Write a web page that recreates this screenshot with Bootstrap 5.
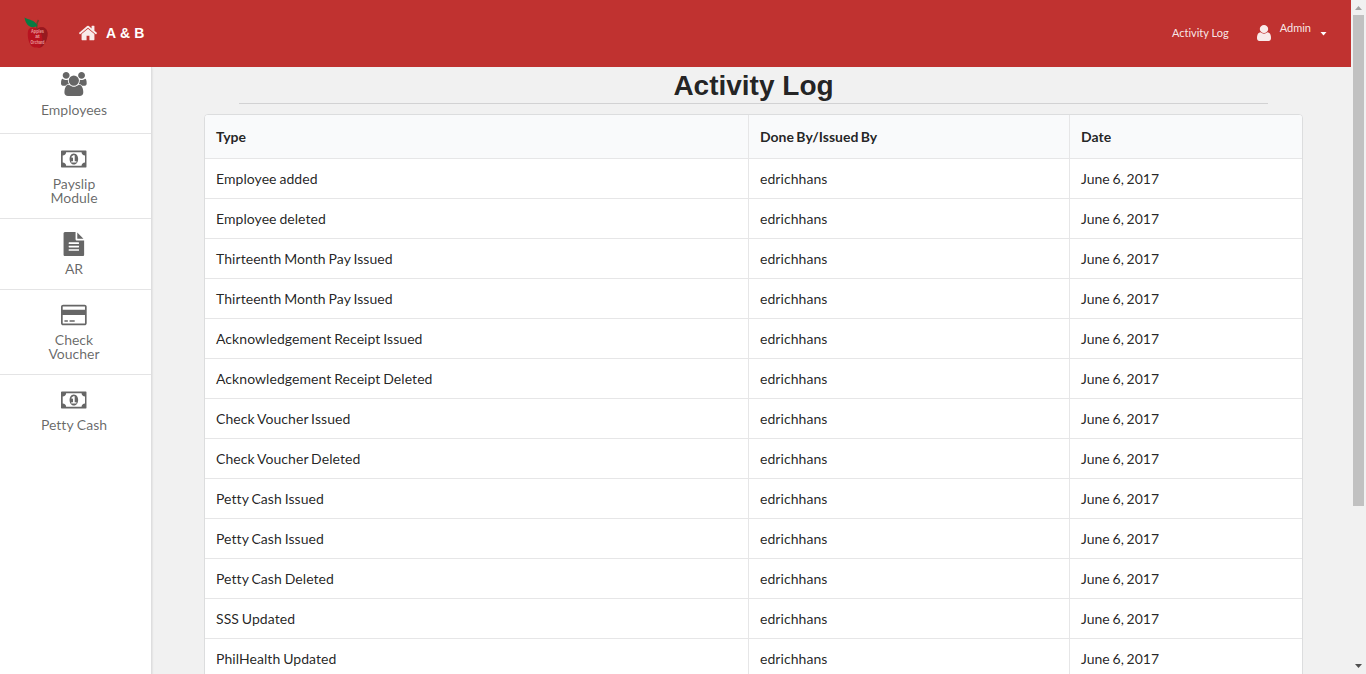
<!DOCTYPE html>
<html lang="en">
<head>
<meta charset="utf-8">
<meta name="viewport" content="width=device-width, initial-scale=1">
<title>Activity Log</title>
<link href="https://cdn.jsdelivr.net/npm/bootstrap@5.3.0/dist/css/bootstrap.min.css" rel="stylesheet">
<style>
body{font-family:Lato,sans-serif;font-size:14px;line-height:20px;color:rgba(0,0,0,.87);background:#f1f1f1;font-variant-ligatures:none}
.topbar{height:67px;padding-bottom:2px;background:#c03230;color:rgba(255,255,255,.9);font-size:11px}
.brand-logo{width:26px;height:32px;margin-left:23px;margin-top:1px;overflow:visible}
.brand-home{width:20px;height:20px;margin-left:29px}
.brand-name{font:bold 14px/20px "Liberation Sans",sans-serif;margin-left:8px;color:#fff;letter-spacing:.2px}
.link-log{margin-right:28px}
.user-icon{width:14px;height:16px;margin-right:9px}
.user-name{margin-top:-10px;margin-right:9px}
.caret-icon{width:7px;height:4px;margin-right:24px;margin-top:2px}
.side{width:152px;background:#fff;border-right:1px solid #dededf;box-shadow:0 1px 2px rgba(34,36,38,.15)}
.side-item{padding:12.5px 3px 13px 0;border-bottom:1px solid #e4e4e5;color:rgba(0,0,0,.6);line-height:14px}
.side-item:first-child{padding-top:5px;padding-bottom:16px}
.side-item:last-child{border-bottom:0}
.side-item svg{width:25.7px;height:24px;margin-bottom:6.5px}
.side-item:first-child svg{margin-bottom:7px}
.side-item span{max-width:70px}
.log-area{padding:0 48px 0 52px}
.log-title{font:bold 28px/36px "Liberation Sans",sans-serif;margin:0 35px;border-bottom:1px solid #d2d2d3;height:37px;padding-top:1px}
.log-table{margin-top:10px;background:#fff;border:1px solid #dcddde;border-radius:4px;border-collapse:separate;border-spacing:0;table-layout:fixed;width:1099px}
.log-table th{background:#f9fafb;height:44px;font-weight:700;word-spacing:-1px}
.log-table td{height:40px;letter-spacing:.06px;word-spacing:-.8px}
.log-table td:last-child{letter-spacing:0}
.log-table th,.log-table td{padding:0 11px;border-bottom:1px solid #e6e6e7;vertical-align:middle}
.log-table th+th,.log-table td+td{border-left:1px solid #e6e6e7}
.log-table th:first-child{border-top-left-radius:3px}
.log-table th:last-child{border-top-right-radius:3px}
.scroll-rail{width:15px;background:#f1f1f1}
.scroll-thumb{width:11px;height:491px;background:#c1c1c1}
</style>
<script src="https://cdn.jsdelivr.net/npm/bootstrap@5.3.0/dist/js/bootstrap.bundle.min.js"></script>
</head>
<body class="vh-100 overflow-hidden d-flex">
<div class="d-flex flex-column flex-grow-1 overflow-hidden">
  <nav class="topbar d-flex align-items-center flex-shrink-0">
    <svg class="brand-logo" viewBox="0 0 26 32">
      <path d="M5 14C6 10 11 10 14 11.500C18 9 24 10 24.500 16C25 23 20 31 16 31C13 30 12 31 10 30C6 28 4 20 5 14Z" fill="#b81320"/>
      <path d="M14 12C18 9 24 10 24.500 16C25 23 20 31 17 30C21 24 20 16 14 12Z" fill="#961a20"/>
      <path d="M14 12Q13 7 15.500 3" stroke="#70412b" stroke-width="1.500" fill="none"/>
      <path d="M1.500 .5C5 3 12 2.500 14.500 9C8 12 3 9 1.500 .5Z" fill="#087b42"/>
      <g fill="#eb9c9c" font-family="Liberation Sans,sans-serif" font-size="5" font-weight="bold" text-anchor="middle"><text x="14.500" y="15.500" textLength="13" lengthAdjust="spacingAndGlyphs">Apples</text><text x="14.500" y="21">at</text><text x="14.500" y="26.500" textLength="14" lengthAdjust="spacingAndGlyphs">Orchard</text></g>
    </svg>
    <svg class="brand-home" viewBox="64 0 1664 1792" fill="currentColor"><path d="M1472 992v480q0 26-19 45t-45 19h-384v-384h-256v384h-384q-26 0-45-19t-19-45v-480q0-1 .5-3t.5-3l575-474 575 474q1 2 1 6zm223-69l-62 74q-8 9-21 11h-3q-13 0-21-7l-692-577-692 577q-12 8-24 7-13-2-21-11l-62-74q-8-10-7-23.500t11-21.500l719-599q32-26 76-26t76 26l244 204v-195q0-14 9-23t23-9h192q14 0 23 9t9 23v408l219 182q10 8 11 21.500t-7 23.500z"/></svg>
    <span class="brand-name">A &amp; B</span>
    <span class="link-log ms-auto">Activity Log</span>
    <svg class="user-icon" viewBox="256 128 1280 1536" preserveAspectRatio="none" fill="currentColor"><path d="M1536 1399q0 109-62.500 187t-150.500 78h-854q-88 0-150.500-78t-62.500-187q0-85 8.500-160.500t31.500-152 58.500-131 94-89 134.500-34.500q131 128 313 128t313-128q76 0 134.500 34.500t94 89 58.500 131 31.500 152 8.500 160.500zm-256-887q0 159-112.500 271.500t-271.500 112.500-271.500-112.500-112.500-271.500 112.500-271.500 271.500-112.500 271.500 112.500 112.500 271.500z"/></svg>
    <span class="user-name">Admin</span>
    <svg class="caret-icon" viewBox="0 0 7 4" fill="#fff"><path d="M.5 0h6L3.500 3.500z"/></svg>
  </nav>
  <svg class="d-none">
    <symbol id="money" viewBox="0 0 1920 1792"><path d="M768 1152h384v-96h-128v-448h-114l-148 137 77 80q42-37 55-57h2v288h-128v96zm512-256q0 70-21 142t-59.500 134-101.500 101-138 39-138-39-101.500-101-59.500-134-21-142 21-142 59.500-134 101.500-101 138-39 138 39 101.500 101 59.500 134 21 142zm512 256v-512q-106 0-181-75t-75-181h-1152q0 106-75 181t-181 75v512q106 0 181 75t75 181h1152q0-106 75-181t181-75zm128-832v1152q0 26-19 45t-45 19h-1792q-26 0-45-19t-19-45v-1152q0-26 19-45t45-19h1792q26 0 45 19t19 45z"/></symbol>
  </svg>
  <div class="d-flex flex-grow-1 overflow-hidden">
    <aside class="side d-flex flex-column flex-shrink-0">
      <div class="side-item d-flex flex-column align-items-center text-center"><svg viewBox="0 0 1920 1792" fill="currentColor"><path d="M593 896q-162 5-265 128h-134q-82 0-138-40.500t-56-118.500q0-353 124-353 6 0 43.500 21t97.500 42.500 119 21.500q67 0 133-23-5 37-5 66 0 139 81 256zm1071 637q0 120-73 189.500t-194 69.500h-874q-121 0-194-69.500t-73-189.500q0-53 3.500-103.500t14-109 26.500-108.500 43-97.500 62-81 85.500-53.500 111.500-20q10 0 43 21.500t73 48 107 48 135 21.500 135-21.500 107-48 73-48 43-21.500q61 0 111.500 20t85.500 53.500 62 81 43 97.500 26.500 108.500 14 109 3.500 103.500zm-1024-1277q0 106-75 181t-181 75-181-75-75-181 75-181 181-75 181 75 75 181zm704 384q0 159-112.500 271.500t-271.500 112.500-271.500-112.500-112.500-271.500 112.500-271.500 271.500-112.500 271.500 112.500 112.500 271.500zm576 225q0 78-56 118.500t-138 40.500h-134q-103-123-265-128 81-117 81-256 0-29-5-66 66 23 133 23 59 0 119-21.500t97.500-42.500 43.500-21q124 0 124 353zm-128-609q0 106-75 181t-181 75-181-75-75-181 75-181 181-75 181 75 75 181z"/></svg><span>Employees</span></div>
      <div class="side-item d-flex flex-column align-items-center text-center"><svg fill="currentColor"><use href="#money"/></svg><span>Payslip Module</span></div>
      <div class="side-item d-flex flex-column align-items-center text-center"><svg viewBox="0 0 1792 1792" fill="currentColor"><path d="M1596 476q14 14 28 36h-472v-472q22 14 36 28zm-476 164h544v1056q0 40-28 68t-68 28h-1344q-40 0-68-28t-28-68v-1600q0-40 28-68t68-28h800v544q0 40 28 68t68 28zm160 736v-64q0-14-9-23t-23-9h-704q-14 0-23 9t-9 23v64q0 14 9 23t23 9h704q14 0 23-9t9-23zm0-256v-64q0-14-9-23t-23-9h-704q-14 0-23 9t-9 23v64q0 14 9 23t23 9h704q14 0 23-9t9-23zm0-256v-64q0-14-9-23t-23-9h-704q-14 0-23 9t-9 23v64q0 14 9 23t23 9h704q14 0 23-9t9-23z"/></svg><span>AR</span></div>
      <div class="side-item d-flex flex-column align-items-center text-center"><svg viewBox="0 0 1920 1792" fill="currentColor"><path d="M1760 128q66 0 113 47t47 113v1216q0 66-47 113t-113 47h-1600q-66 0-113-47t-47-113v-1216q0-66 47-113t113-47h1600zm-1600 128q-13 0-22.500 9.500t-9.500 22.500v224h1664v-224q0-13-9.500-22.500t-22.500-9.500h-1600zm1600 1280q13 0 22.500-9.500t9.500-22.500v-608h-1664v608q0 13 9.500 22.500t22.500 9.500h1600zm-1504-128v-128h256v128h-256zm384 0v-128h384v128h-384z"/></svg><span>Check Voucher</span></div>
      <div class="side-item d-flex flex-column align-items-center text-center"><svg fill="currentColor"><use href="#money"/></svg><span>Petty Cash</span></div>
    </aside>
    <main class="log-area flex-grow-1">
      <h1 class="log-title text-center">Activity Log</h1>
      <table class="log-table">
        <colgroup><col style="width:543px"><col style="width:321px"><col></colgroup>
        <thead><tr><th>Type</th><th>Done By/Issued By</th><th>Date</th></tr></thead>
        <tbody>
          <tr><td>Employee added</td><td>edrichhans</td><td>June 6, 2017</td></tr>
          <tr><td>Employee deleted</td><td>edrichhans</td><td>June 6, 2017</td></tr>
          <tr><td>Thirteenth Month Pay Issued</td><td>edrichhans</td><td>June 6, 2017</td></tr>
          <tr><td>Thirteenth Month Pay Issued</td><td>edrichhans</td><td>June 6, 2017</td></tr>
          <tr><td>Acknowledgement Receipt Issued</td><td>edrichhans</td><td>June 6, 2017</td></tr>
          <tr><td>Acknowledgement Receipt Deleted</td><td>edrichhans</td><td>June 6, 2017</td></tr>
          <tr><td>Check Voucher Issued</td><td>edrichhans</td><td>June 6, 2017</td></tr>
          <tr><td>Check Voucher Deleted</td><td>edrichhans</td><td>June 6, 2017</td></tr>
          <tr><td>Petty Cash Issued</td><td>edrichhans</td><td>June 6, 2017</td></tr>
          <tr><td>Petty Cash Issued</td><td>edrichhans</td><td>June 6, 2017</td></tr>
          <tr><td>Petty Cash Deleted</td><td>edrichhans</td><td>June 6, 2017</td></tr>
          <tr><td>SSS Updated</td><td>edrichhans</td><td>June 6, 2017</td></tr>
          <tr><td>PhilHealth Updated</td><td>edrichhans</td><td>June 6, 2017</td></tr>
        </tbody>
      </table>
    </main>
  </div>
</div>
<div class="scroll-rail d-flex flex-column align-items-center flex-shrink-0">
  <svg width="15" height="15" viewBox="0 0 15 15" class="flex-shrink-0"><path d="M4 10h7L7.500 6z" fill="#a3a3a3"/></svg>
  <div class="scroll-thumb flex-shrink-0"></div>
  <svg width="15" height="15" viewBox="0 0 15 15" class="mt-auto flex-shrink-0"><path d="M4 5h7L7.500 9z" fill="#505050"/></svg>
</div>
</body>
</html>
